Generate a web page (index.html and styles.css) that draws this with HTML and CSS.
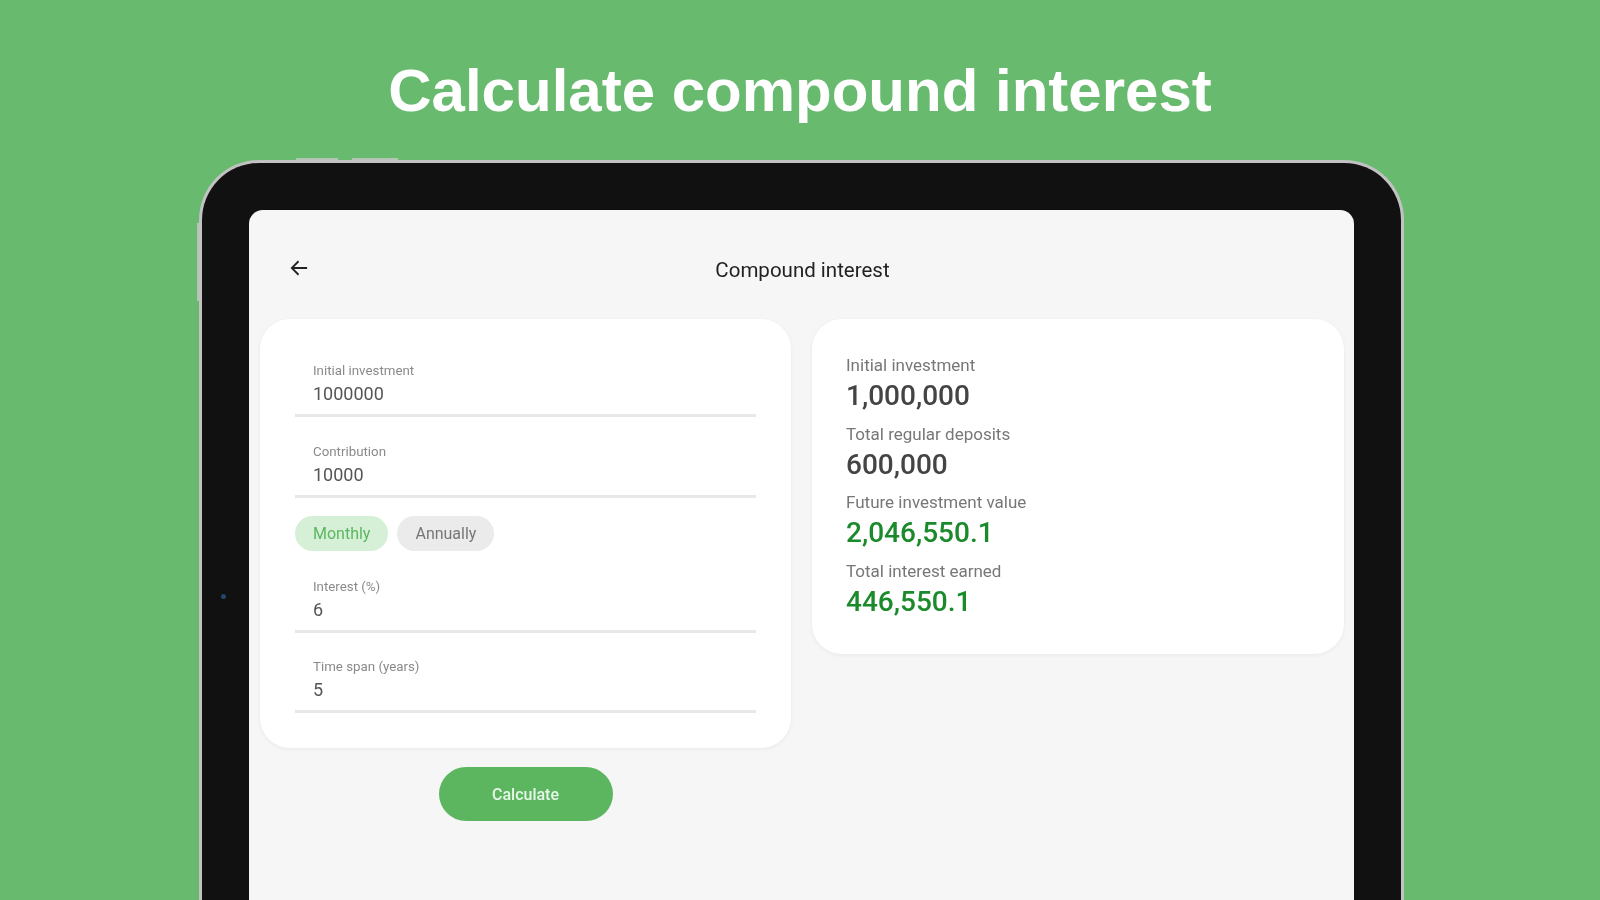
FILE: index.html
```html
<!DOCTYPE html>
<html lang="en">
<head>
    <meta charset="UTF-8">
    <meta name="viewport" content="width=device-width, initial-scale=1.0">
    <link rel="stylesheet" href="styles.css">
    <title>Calculate compound interest</title>
</head>
<body>
    <h1 class="headline">Calculate compound interest</h1>
    <div class="tablet">
        <span class="side-button side-button-top"></span>
        <span class="side-button side-button-top-2"></span>
        <span class="side-button side-button-left"></span>
        <span class="camera"></span>
        <div class="screen">
            <header class="app-bar">
                <svg class="back-icon" viewBox="0 0 20 20" aria-hidden="true">
                    <path d="M19 10H2M9.5 2.5 2 10l7.5 7.5"></path>
                </svg>
                <h2>Compound interest</h2>
            </header>
            <div class="columns">
                <div class="form-column">
                    <div class="card form-card">
                        <div class="field">
                            <label>Initial investment</label>
                            <div class="field-value">1000000</div>
                        </div>
                        <div class="field">
                            <label>Contribution</label>
                            <div class="field-value">10000</div>
                        </div>
                        <div class="chips">
                            <span class="chip chip-active">Monthly</span>
                            <span class="chip">Annually</span>
                        </div>
                        <div class="field">
                            <label>Interest (%)</label>
                            <div class="field-value">6</div>
                        </div>
                        <div class="field">
                            <label>Time span (years)</label>
                            <div class="field-value">5</div>
                        </div>
                    </div>
                    <button class="calculate-button">Calculate</button>
                </div>
                <div class="card result-card">
                    <div class="result">
                        <p class="result-label">Initial investment</p>
                        <p class="result-value">1,000,000</p>
                    </div>
                    <div class="result">
                        <p class="result-label">Total regular deposits</p>
                        <p class="result-value">600,000</p>
                    </div>
                    <div class="result">
                        <p class="result-label">Future investment value</p>
                        <p class="result-value result-green">2,046,550.1</p>
                    </div>
                    <div class="result">
                        <p class="result-label">Total interest earned</p>
                        <p class="result-value result-green">446,550.1</p>
                    </div>
                </div>
            </div>
        </div>
    </div>
</body>
</html>
```

FILE: styles.css
```css
html, body {
    height: 100%;
}
body {
    margin: 0;
    overflow: hidden;
    background-color: #68ba6e;
    font-family: Roboto, "Liberation Sans", sans-serif;
    color: #333;
}
.headline {
    margin: 0;
    height: 160px;
    padding-top: 57px;
    box-sizing: border-box;
    text-align: center;
    font-family: "Liberation Sans", Arial, sans-serif;
    font-size: 60px;
    line-height: 68px;
    font-weight: 700;
    color: #fff;
    filter: blur(0.5px);
}
.tablet {
    position: relative;
    box-sizing: border-box;
    width: 1205px;
    height: 740px;
    margin-left: 199px;
    padding: 47px 47px 0 47px;
    border: 3px solid #c2c2c2;
    border-bottom: none;
    border-radius: 60px 60px 0 0;
    background-color: #111;
    filter: blur(0.6px);
}
.side-button {
    position: absolute;
    background-color: #b4c4b5;
}
.side-button-top {
    top: -5px;
    left: 94px;
    width: 42px;
    height: 2px;
}
.side-button-top-2 {
    top: -5px;
    left: 150px;
    width: 46px;
    height: 2px;
}
.side-button-left {
    top: 60px;
    left: -5px;
    width: 2px;
    height: 78px;
}
.camera {
    position: absolute;
    top: 431px;
    left: 19px;
    width: 5px;
    height: 5px;
    border-radius: 50%;
    background-color: #26456e;
}
.screen {
    height: 100%;
    padding: 0 9px 0 11px;
    border-radius: 14px 14px 0 0;
    background-color: #f6f6f6;
}
.app-bar {
    position: relative;
    display: flex;
    align-items: center;
    justify-content: center;
    height: 109px;
    padding-top: 11px;
    box-sizing: border-box;
}
.app-bar h2 {
    margin: 0;
    font-size: 20.5px;
    font-weight: 400;
    color: #222;
}
.back-icon {
    position: absolute;
    left: 30px;
    top: 49px;
    width: 18px;
    height: 18px;
    fill: none;
    stroke: #222;
    stroke-width: 2;
}
.columns {
    display: grid;
    grid-template-columns: 531px 532px;
    gap: 21px;
    align-items: start;
}
.form-column {
    display: flex;
    flex-direction: column;
    align-items: center;
}
.card {
    box-sizing: border-box;
    width: 100%;
    border-radius: 30px;
    background-color: #fff;
    box-shadow: 0 1px 4px rgba(0, 0, 0, 0.06);
}
.form-card {
    padding: 44px 35px 35px;
}
.field {
    padding: 0 0 8px 18px;
    border-bottom: 3px solid #e8e8e8;
}
.field + .field {
    margin-top: 26.5px;
}
.field label {
    display: block;
    font-size: 13.3px;
    line-height: 16px;
    color: #8a8a8a;
}
.field-value {
    margin-top: 3px;
    font-size: 18px;
    line-height: 24px;
    color: #555;
}
.chips {
    display: flex;
    gap: 9px;
    margin: 18px 0 28px;
}
.chip {
    padding: 0 18px;
    border-radius: 18px;
    background-color: #ebebeb;
    font-size: 16px;
    line-height: 35px;
    color: #777;
}
.chip-active {
    background-color: #d6f0d8;
    color: #5cb660;
}
.calculate-button {
    width: 174px;
    height: 54px;
    margin-top: 19px;
    border: none;
    border-radius: 27px;
    background-color: #5cb660;
    font-family: inherit;
    font-size: 16px;
    font-weight: 500;
    color: #e8f6e9;
}
.result-card {
    height: 335px;
    padding: 35px 34px;
}
.result {
    height: 68.5px;
}
.result-label {
    margin: 0 0 2px;
    font-size: 17px;
    line-height: 22px;
    color: #777;
}
.result-value {
    margin: 0;
    font-size: 28px;
    line-height: 36px;
    font-weight: 500;
    color: #444;
}
.result-green {
    color: #1b8a2a;
}
```
